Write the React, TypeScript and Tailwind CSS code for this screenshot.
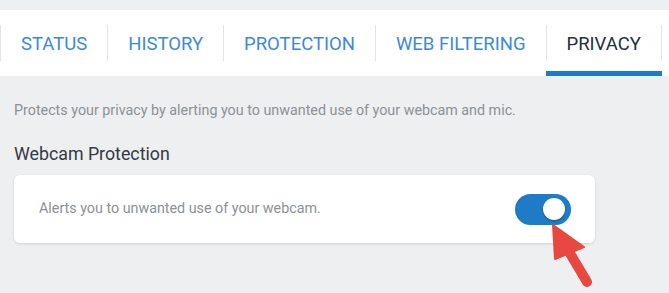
import React from "react";

const tabs = ["STATUS", "HISTORY", "PROTECTION", "WEB FILTERING", "PRIVACY"];

export default function App() {
  return (
    <div className="relative w-[669px] h-[293px] bg-[#eeeff1] overflow-hidden" style={{ fontFamily: "Roboto, 'Liberation Sans', sans-serif" }}>
      <div className="pt-[10px]">
        <div className="h-[66px] bg-white flex">
          {tabs.map((t, i) => {
            const active = t === "PRIVACY";
            return (
              <div key={t} className="flex flex-col pt-[15px]">
                <div
                  className={`h-[36px] flex items-center pt-[3px] px-5 border-l border-[#e3e4e6] text-[18.5px] leading-none ${
                    i === tabs.length - 1 ? "border-r" : ""
                  } ${active ? "text-[#23303f]" : "text-[#3b8ad9]"}`}
                >
                  {t}
                </div>
                <div className={`mt-[10px] h-[5px] ${active ? "bg-[#1b7bc7]" : ""}`} />
              </div>
            );
          })}
        </div>
      </div>
      <div className="px-[14px]">
        <p className="mt-[25px] text-[14.3px] leading-[18px] text-[#8c9196]">
          Protects your privacy by alerting you to unwanted use of your webcam and mic.
        </p>
        <h2 className="mt-[24px] text-[17.8px] leading-[22px] text-[#333a42]">Webcam Protection</h2>
        <div className="mt-[10px] w-[581px] h-[68px] bg-white rounded-[6px] shadow-[0_1px_3px_rgba(0,0,0,0.12)] flex items-center justify-between pl-[25px] pr-[24px]">
          <span className="text-[14.3px] text-[#8c9196]">Alerts you to unwanted use of your webcam.</span>
          <div className="w-[56px] h-[31px] rounded-full bg-[#1e7cc6] flex items-center justify-end pr-[6px]">
            <div className="w-[22px] h-[22px] rounded-full bg-white shadow-[0_1px_2px_rgba(0,0,0,0.35)]" />
          </div>
        </div>
      </div>
      <svg className="absolute left-0 top-0 pointer-events-none" width="669" height="293" viewBox="0 0 669 293">
        <polygon points="553,225 555,259 584,247" fill="#e8483f" stroke="#e8483f" strokeWidth="2" strokeLinejoin="round" />
        <line x1="568" y1="250" x2="587" y2="282" stroke="#e8483f" strokeWidth="10" strokeLinecap="round" />
      </svg>
    </div>
  );
}
